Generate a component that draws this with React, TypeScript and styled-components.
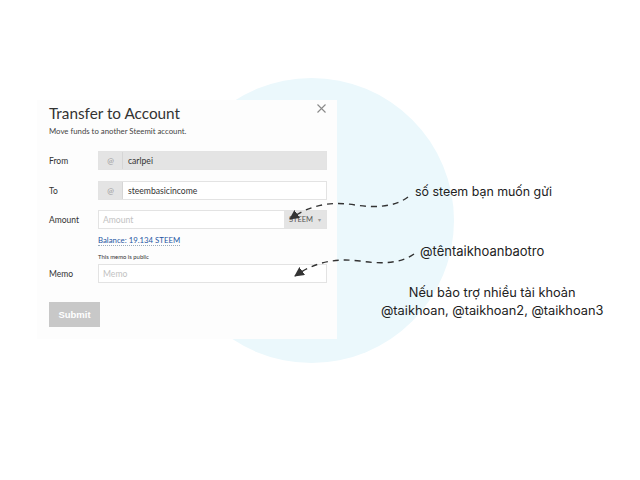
import { createGlobalStyle, styled } from "styled-components";

const GlobalStyle = createGlobalStyle`
	html, body {
		margin: 0;
		padding: 0;
		background: #ffffff;
	}
	* {
		box-sizing: border-box;
	}
`;

const Stage = styled.div`
	position: relative;
	width: 640px;
	height: 480px;
	overflow: hidden;
	padding: 100px 0 0 37px;
	font-family: Lato, "Noto Sans", sans-serif;
`;

const Backdrop = styled.div`
	position: absolute;
	left: 169px;
	top: 78px;
	width: 285px;
	height: 285px;
	border-radius: 50%;
	background: #ebf8fc;
`;

const Card = styled.div`
	position: relative;
	width: 300px;
	height: 239px;
	background: #fdfdfd;
	padding: 2px 10px 0 12px;
	display: flex;
	flex-direction: column;
`;

const CloseButton = styled.button`
	position: absolute;
	right: 10px;
	top: 3px;
	width: 11px;
	height: 11px;
	padding: 0;
	border: none;
	background: none;
	display: flex;
`;

const Title = styled.h1`
	margin: 0;
	font-size: 15.3px;
	line-height: 22px;
	font-weight: 400;
	color: #333;
`;

const Subtitle = styled.p`
	margin: 0 0 13px;
	font-size: 7.8px;
	line-height: 14px;
	color: #444;
`;

const Row = styled.div<{ $gap?: number }>`
	display: flex;
	align-items: center;
	margin-bottom: ${({ $gap }) => $gap ?? 0}px;
`;

const Label = styled.span`
	width: 49px;
	font-size: 8.5px;
	color: #333;
`;

const Field = styled.div`
	width: 229px;
	height: 19px;
	display: flex;
	border: 1px solid #e3e3e3;
	background: #fff;
`;

const Addon = styled.span`
	width: 24px;
	background: #e4e4e4;
	border-right: 1px solid #d6d6d6;
	display: flex;
	align-items: center;
	justify-content: center;
	font-size: 8px;
	color: #999;
`;

const Value = styled.span<{ $disabled?: boolean; $placeholder?: boolean }>`
	flex: 1;
	display: flex;
	align-items: center;
	padding-left: ${({ $placeholder }) => ($placeholder ? 4 : 5)}px;
	font-size: 8.6px;
	background: ${({ $disabled }) => ($disabled ? "#e4e4e4" : "#fff")};
	color: ${({ $placeholder }) => ($placeholder ? "#c2c2c2" : "#333")};
`;

const Currency = styled.span`
	width: 42px;
	background: #e4e4e4;
	display: flex;
	align-items: center;
	justify-content: center;
	gap: 5px;
	font-size: 7.5px;
	color: #555;

	&::after {
		content: "▾";
		font-size: 6px;
		color: #999;
	}
`;

const Balance = styled.div`
	margin: 4px 0 5px 49px;
	font-size: 7.8px;
	line-height: 14px;
	color: #1f56a3;

	span {
		border-bottom: 1px dotted #9ab;
	}
`;

const Note = styled.div`
	margin: 0 0 2px 49px;
	font-size: 5.9px;
	line-height: 10px;
	color: #333;
`;

const Submit = styled.button`
	margin-top: 19px;
	width: 51px;
	height: 25px;
	border: none;
	background: #c8c8c8;
	color: #fff;
	font-family: "Liberation Sans", Arial, sans-serif;
	font-weight: 700;
	font-size: 9.5px;
	padding: 0;
`;

const Overlay = styled.svg`
	position: absolute;
	left: 0;
	top: 0;
	width: 640px;
	height: 480px;
	pointer-events: none;
`;

const Callout = styled.div<{ $x: number; $y: number; $size?: number; $center?: boolean }>`
	position: absolute;
	left: ${({ $x }) => $x}px;
	top: ${({ $y }) => $y}px;
	font-family: Inter, "Liberation Sans", sans-serif;
	font-size: ${({ $size }) => $size ?? 13}px;
	line-height: 18px;
	color: #222;
	text-align: ${({ $center }) => ($center ? "center" : "left")};
	white-space: nowrap;
`;

const App = () => {
	return (
		<>
			<GlobalStyle />
			<Stage>
				<Backdrop />
				<Card>
					<CloseButton aria-label="close">
						<svg width="11" height="11" viewBox="0 0 11 11">
							<path d="M1.5 1.5 L9.5 9.5 M9.5 1.5 L1.5 9.5" stroke="#8a8a8a" strokeWidth="1.1" />
						</svg>
					</CloseButton>
					<Title>Transfer to Account</Title>
					<Subtitle>Move funds to another Steemit account.</Subtitle>
					<Row $gap={11}>
						<Label>From</Label>
						<Field>
							<Addon>@</Addon>
							<Value $disabled>carlpei</Value>
						</Field>
					</Row>
					<Row $gap={10}>
						<Label>To</Label>
						<Field>
							<Addon>@</Addon>
							<Value>steembasicincome</Value>
						</Field>
					</Row>
					<Row>
						<Label>Amount</Label>
						<Field>
							<Value $placeholder>Amount</Value>
							<Currency>STEEM</Currency>
						</Field>
					</Row>
					<Balance>
						<span>Balance: 19.134 STEEM</span>
					</Balance>
					<Note>This memo is public</Note>
					<Row>
						<Label>Memo</Label>
						<Field>
							<Value $placeholder>Memo</Value>
						</Field>
					</Row>
					<div>
						<Submit>Submit</Submit>
					</div>
				</Card>

				<Overlay viewBox="0 0 640 480">
					<defs>
						<marker id="head" viewBox="0 0 10 10" refX="9" refY="5" markerWidth="7" markerHeight="7" orient="auto-start-reverse">
							<path d="M0 0 L10 5 L0 10 z" fill="#333" />
						</marker>
					</defs>
					<path
						d="M408 197 C 395 207, 375 208, 355 205 C 330 201, 310 205, 290 219"
						fill="none"
						stroke="#333"
						strokeWidth="1.4"
						strokeDasharray="6 5"
						markerEnd="url(#head)"
					/>
					<path
						d="M414 254 C 400 264, 380 264, 360 261 C 335 258, 315 262, 295 276"
						fill="none"
						stroke="#333"
						strokeWidth="1.4"
						strokeDasharray="6 5"
						markerEnd="url(#head)"
					/>
				</Overlay>

				<Callout $x={415} $y={183} $size={12.4}>số steem bạn muốn gửi</Callout>
				<Callout $x={420} $y={242}>@têntaikhoanbaotro</Callout>
				<Callout $x={381} $y={284} $size={12.8} $center>
					Nếu bảo trợ nhiều tài khoản
					<br />
					@taikhoan, @taikhoan2, @taikhoan3
				</Callout>
			</Stage>
		</>
	);
};

export default App;
